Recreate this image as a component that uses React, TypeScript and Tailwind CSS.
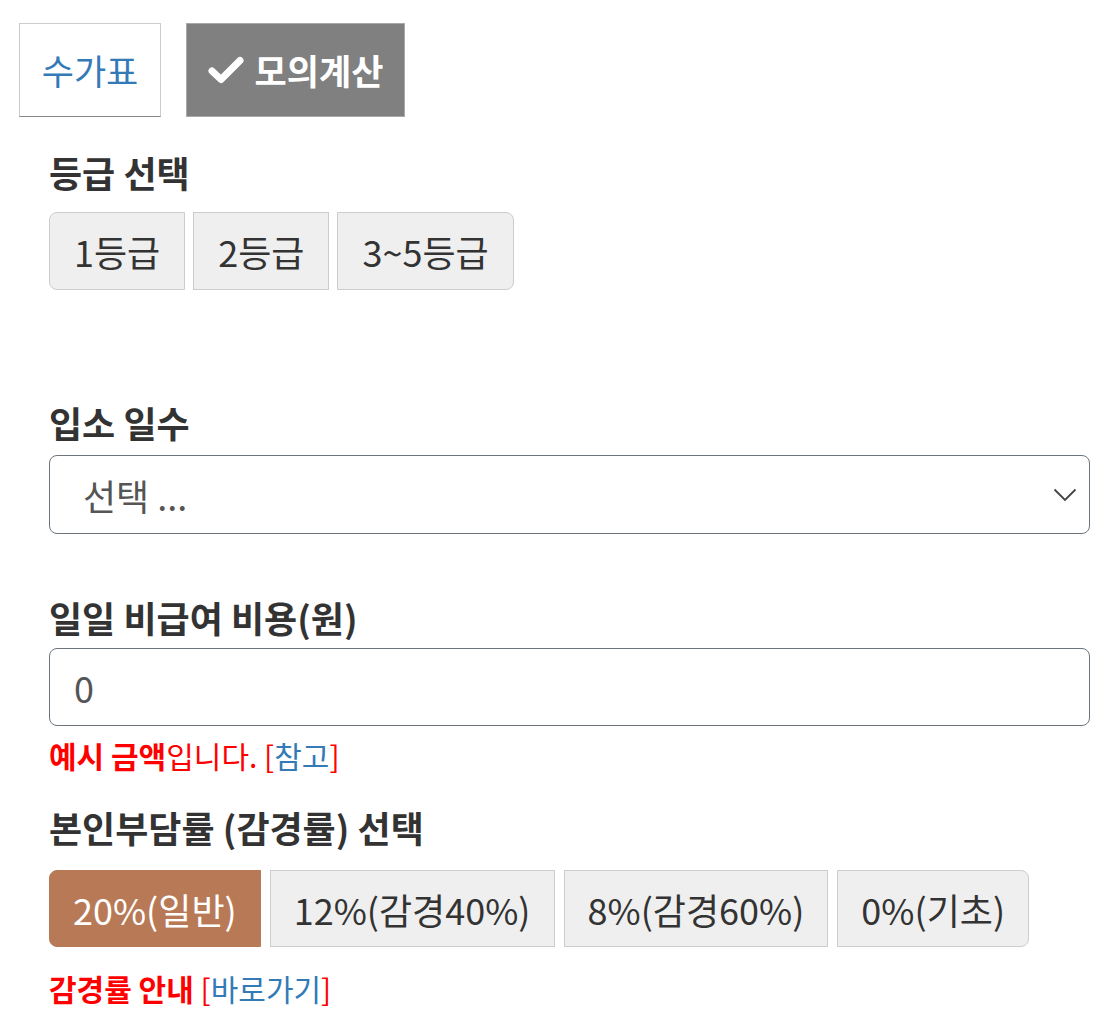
import React from "react";

const font = { fontFamily: '"Noto Sans CJK KR", "Noto Sans", sans-serif' };

export default function App() {
  const grades = ["1등급", "2등급", "3~5등급"];
  const rates = ["20%(일반)", "12%(감경40%)", "8%(감경60%)", "0%(기초)"];
  return (
    <div className="bg-white w-[1105px] h-[1026px] overflow-hidden text-[#333]" style={font}>
      <div className="flex gap-[25px] pt-[23px] pl-[19px]">
        <div className="h-[94px] w-[142px] flex items-center justify-center border border-[#ccc] border-b-[#888] border-b-dotted text-[#337ab7] text-[35px]">
          수가표
        </div>
        <div className="h-[94px] w-[219px] flex items-center justify-center gap-[11px] bg-[#808080] border border-[#aaa] text-white text-[35px] font-bold">
          <svg width="36" height="28" viewBox="0 0 36 28">
            <path d="M4 15 L13 23.5 L32 4.5" stroke="white" strokeWidth="7" fill="none" strokeLinecap="round" strokeLinejoin="round" />
          </svg>
          <span>모의계산</span>
        </div>
      </div>

      <div className="pl-[49px] pr-[15px]">
        <div className="mt-[31px] text-[36px] font-bold leading-[48px]">등급 선택</div>
        <div className="mt-[16px] flex gap-[8px]">
          {grades.map((g, i) => (
            <div
              key={g}
              className={`h-[78px] px-[24px] flex items-center justify-center bg-[#efefef] border border-[#ccc] text-[36px] ${
                i === 0 ? "rounded-l-[8px]" : ""
              } ${i === grades.length - 1 ? "rounded-r-[8px]" : ""}`}
            >
              {g}
            </div>
          ))}
        </div>

        <div className="mt-[108px] text-[36px] font-bold leading-[48px]">입소 일수</div>
        <div className="mt-[9px] h-[79px] border border-[#6c757d] rounded-[8px] flex items-center justify-between pl-[33px] pr-[12px] text-[36px] text-[#555]">
          <span>선택 ...</span>
          <svg width="24" height="14" viewBox="0 0 24 14">
            <path d="M1.5 1.5 L12 12 L22.5 1.5" stroke="#444" strokeWidth="1.8" fill="none" />
          </svg>
        </div>

        <div className="mt-[59px] text-[36px] font-bold leading-[48px]">일일 비급여 비용(원)</div>
        <div className="mt-[7px] h-[78px] border border-[#6c757d] rounded-[8px] flex items-center pl-[24px] text-[36px] text-[#555]">
          0
        </div>

        <div className="mt-[9px] text-[30px] leading-[40px] text-[#ff0000]">
          <span className="font-bold">예시 금액</span>입니다. [<span className="text-[#337ab7]">참고</span>]
        </div>

        <div className="mt-[28px] text-[36px] font-bold leading-[48px]">본인부담률 (감경률) 선택</div>
        <div className="mt-[19px] flex gap-[9px]">
          {rates.map((r, i) => (
            <div
              key={r}
              className={`h-[77px] px-[23px] flex items-center justify-center border text-[36px] ${
                i === 0 ? "bg-[#b87a56] border-[#b87a56] text-white rounded-l-[8px]" : "bg-[#efefef] border-[#ccc]"
              } ${i === rates.length - 1 ? "rounded-r-[8px]" : ""}`}
            >
              {r}
            </div>
          ))}
        </div>

        <div className="mt-[21px] text-[30px] leading-[40px] text-[#ff0000]">
          <span className="font-bold">감경률 안내</span> [<span className="text-[#337ab7]">바로가기</span>]
        </div>
      </div>
    </div>
  );
}
